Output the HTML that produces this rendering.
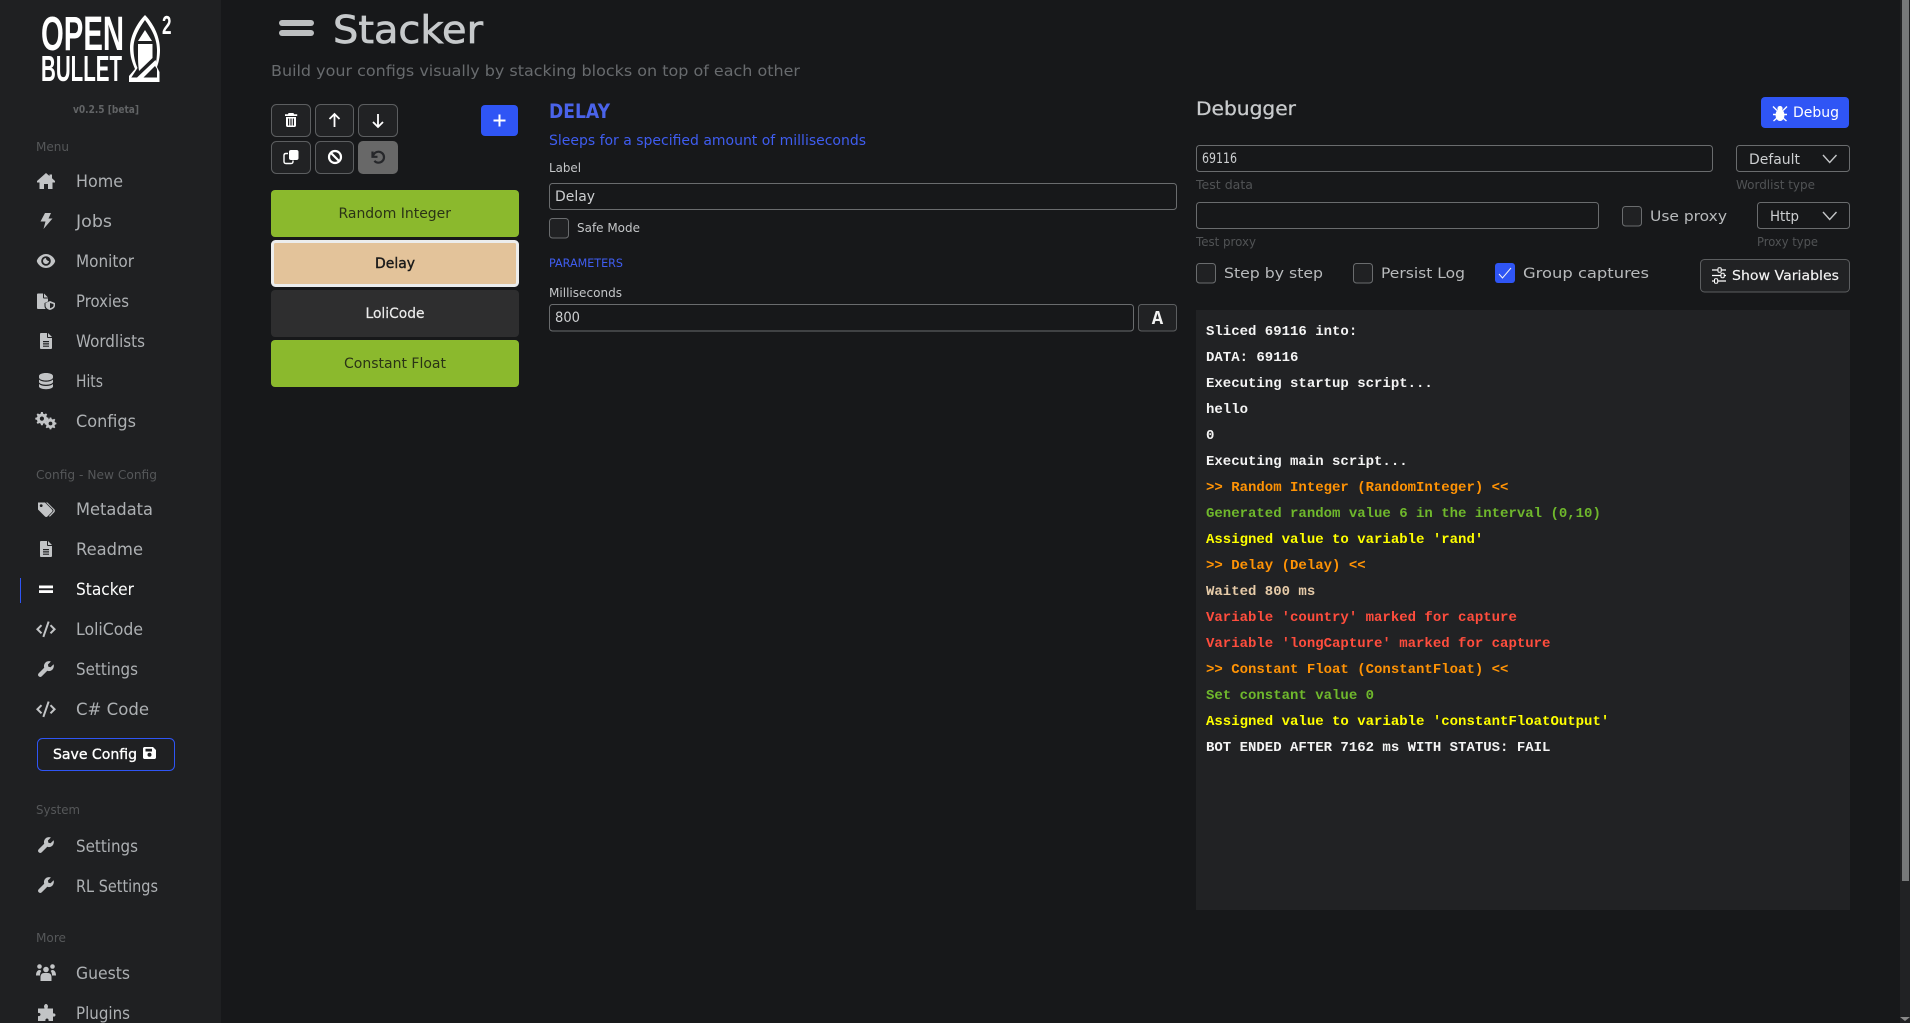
<!DOCTYPE html>
<html lang="en"><head><meta charset="utf-8"><title>Stacker</title>
<style>
html,body{margin:0;padding:0;width:1910px;height:1023px;overflow:hidden;background:#17181a}
svg{display:block;position:absolute;left:0;top:0}
text{font-family:"DejaVu Sans","Liberation Sans",sans-serif;white-space:pre}
.nav{font-size:16.5px;fill:#adb0b3}
.sec{font-size:12.5px;fill:#555759}
.ic{fill:#c2c4c6}
.hint{font-size:12px;fill:#515355}
.lab{font-size:12px;fill:#c4c6c8}
.val{font-size:14px;fill:#cdcfd1}
.chk{font-size:14.5px;fill:#b8babc}
.log{font-family:"Liberation Mono","DejaVu Sans Mono",monospace;font-size:14px;font-weight:700;fill:#f4f4f4}
.o{fill:#ff9305}.g{fill:#6fb82c}.y{fill:#ffff00}.r{fill:#ff4d3d}.t{fill:#e6cba8}
.box{fill:none;stroke:#6a6c6e;stroke-width:1}
.tb{fill:#212224;stroke:#5c5e60;stroke-width:1}
</style></head>
<body>
<svg width="1910" height="1023" viewBox="0 0 1910 1023" xmlns="http://www.w3.org/2000/svg">
<rect width="1910" height="1023" fill="#17181a"/>
<rect width="221" height="1023" fill="#1f2022"/>
<!-- scrollbar -->
<rect x="1900" width="10" height="1023" fill="#212224"/>
<rect x="1902" width="7" height="881" fill="#77797a"/>
<path d="M1901 1017h10l-5 4z" fill="#8a8a8a" transform="translate(-1 0)"/>

<!-- logo -->
<text x="41" y="50" font-size="48" font-weight="700" fill="#fff" textLength="83" lengthAdjust="spacingAndGlyphs" style="font-family:'Liberation Sans',sans-serif">OPEN</text>
<text x="41" y="81" font-size="36" font-weight="700" fill="#fff" textLength="81" lengthAdjust="spacingAndGlyphs" style="font-family:'Liberation Sans',sans-serif">BULLET</text>
<text x="162" y="34" font-size="26" font-weight="700" fill="#fff" textLength="9.5" lengthAdjust="spacingAndGlyphs" style="font-family:'Liberation Sans',sans-serif">2</text>
<path d="M145 15C152 22 160 35 160 50C160 57 158.500 63 157 67L159.500 72V82H129V76L135 69C132 62 130 56 130 48C130 35 138 22 145 15Z" fill="#fff"/>
<path d="M145 20C140 27 133.500 37 133.500 48C133.500 56 135 62 137.500 68L131 78H157V69L155 66C156.500 62 157 56 157 50C157 37 150 27 145 20Z" fill="#1f2022"/>
<path d="M145 30L152 41H138Z" fill="#fff"/>
<path d="M138 44H152.500V58L139 71C138 64 138 60 138 52Z" fill="#fff"/>
<path d="M155.500 60L157 64L143 78H136.500Z" fill="#fff"/>
<path d="M129 77.500H159.500V82H129Z" fill="#fff"/>
<text x="73" y="113" font-size="10.5" font-weight="700" fill="#626466" textLength="66" lengthAdjust="spacingAndGlyphs">v0.2.5 [beta]</text>

<!-- sidebar labels -->
<text class="sec" x="36" y="151" textLength="33" lengthAdjust="spacingAndGlyphs">Menu</text>
<text class="nav" x="76" y="187" textLength="47" lengthAdjust="spacingAndGlyphs">Home</text>
<text class="nav" x="76" y="227" textLength="36" lengthAdjust="spacingAndGlyphs">Jobs</text>
<text class="nav" x="76" y="267" textLength="58" lengthAdjust="spacingAndGlyphs">Monitor</text>
<text class="nav" x="76" y="307" textLength="53" lengthAdjust="spacingAndGlyphs">Proxies</text>
<text class="nav" x="76" y="347" textLength="69" lengthAdjust="spacingAndGlyphs">Wordlists</text>
<text class="nav" x="76" y="387" textLength="27" lengthAdjust="spacingAndGlyphs">Hits</text>
<text class="nav" x="76" y="427" textLength="60" lengthAdjust="spacingAndGlyphs">Configs</text>
<text class="sec" x="36" y="479" textLength="121" lengthAdjust="spacingAndGlyphs">Config - New Config</text>
<text class="nav" x="76" y="515" textLength="77" lengthAdjust="spacingAndGlyphs">Metadata</text>
<text class="nav" x="76" y="555" textLength="67" lengthAdjust="spacingAndGlyphs">Readme</text>
<text class="nav" x="76" y="595" textLength="58" lengthAdjust="spacingAndGlyphs" style="fill:#fff">Stacker</text>
<text class="nav" x="76" y="635" textLength="67" lengthAdjust="spacingAndGlyphs">LoliCode</text>
<text class="nav" x="76" y="675" textLength="62" lengthAdjust="spacingAndGlyphs">Settings</text>
<text class="nav" x="76" y="715" textLength="73" lengthAdjust="spacingAndGlyphs">C# Code</text>
<rect x="37.5" y="738.5" width="137" height="32" rx="5" fill="none" stroke="#2f55f5" stroke-width="1"/>
<text x="53" y="759" font-size="14.5" fill="#fff" stroke="#fff" stroke-width=".35" textLength="84" lengthAdjust="spacingAndGlyphs">Save Config</text>
<text class="sec" x="36" y="814" textLength="44" lengthAdjust="spacingAndGlyphs">System</text>
<text class="nav" x="76" y="852" textLength="62" lengthAdjust="spacingAndGlyphs">Settings</text>
<text class="nav" x="76" y="892" textLength="82" lengthAdjust="spacingAndGlyphs">RL Settings</text>
<text class="sec" x="36" y="942" textLength="30" lengthAdjust="spacingAndGlyphs">More</text>
<text class="nav" x="76" y="979" textLength="54" lengthAdjust="spacingAndGlyphs">Guests</text>
<text class="nav" x="76" y="1019" textLength="54" lengthAdjust="spacingAndGlyphs">Plugins</text>
<rect x="20" y="578" width="1" height="25" fill="#2f55f5"/>

<!-- sidebar icons -->
<defs>
<path id="wrench" d="M15.6 3.2l-3 3-2.2-.5-.5-2.2 3-3C11 -.2 8.800.2 7.400 1.600 6 3 5.600 5 6.200 6.700L.7 12.200c-.9.9-.9 2.300 0 3.100.9.900 2.300.900 3.100 0l5.500-5.500c1.700.6 3.700.2 5.100-1.200 1.300-1.400 1.800-3.600 1.200-5.400z"/>
<path id="code" d="M8.300 16.200L6.400 15.600 11.700 .3 13.600 .9zM4.800 13L0 8.200 4.800 3.500 6.200 4.900 2.900 8.200 6.200 11.600zM15.200 13L13.800 11.600 17.100 8.200 13.800 4.900 15.200 3.500 20 8.200z"/>
<path id="file" d="M7 0H1C.4 0 0 .4 0 1v14c0 .6.400 1 1 1h10c.6 0 1-.4 1-1V5H8C7.400 5 7 4.600 7 4zM8 0v4h4zM3 8h6v1.200H3zM3 10.300h6v1.200H3zM3 12.600h6v1.200H3z" fill-rule="evenodd"/>
</defs>
<g class="ic">
<path d="M46 173L37 181V182.500H39.500V189H44V184H48V189H52.500V182.500H55V181L52 178.300V174.500H49.500V176Z"/>
<path d="M45 213H51L48.500 218.500H52.500L43.500 229L45.500 221.500H40.500Z"/>
<path fill-rule="evenodd" d="M46 254C40.500 254 37 259 36.800 261C37 263 40.500 268 46 268C51.500 268 55 263 55.200 261C55 259 51.500 254 46 254ZM46 256.200A4.800 4.800 0 1 1 46 265.800A4.800 4.800 0 1 1 46 256.200ZM46 258A3 3 0 1 0 49 261C47.800 261 46 260 46 258Z"/>
<path d="M37 294.500C37 293.900 37.400 293.500 38 293.500H43V297.500C43 298 43.500 298.500 44 298.500H48V301.500L44.500 303V306C44.500 307 45 308.300 45.700 309H38C37.400 309 37 308.600 37 308ZM44 293.500L48 297.500H44Z"/>
<path fill-rule="evenodd" d="M50 301L55 303V305.500C55 307.800 53 309 50 310C47 309 45.500 307.800 45.500 305.500V303ZM50 303V308.300C52 307.500 53.500 306.800 53.500 305.500V304Z"/>
<use href="#file" x="40" y="333"/>
<path d="M46 373C49.900 373 53 374.300 53 376V377.500C53 379.200 49.900 380.500 46 380.500S39 379.200 39 377.500V376C39 374.300 42.100 373 46 373ZM39 379.500C40.500 381 43 381.700 46 381.700S51.500 381 53 379.500V382C53 383.500 49.900 384.700 46 384.700S39 383.500 39 382ZM39 384C40.500 385.400 43 386 46 386S51.500 385.400 53 384V386.500C53 388 49.900 389.200 46 389.200S39 388 39 386.500Z"/>
<g fill-rule="evenodd">
<path d="M41 413L42.800 413 43.200 414.700 44.500 415.300 46 414.400 47.200 415.600 46.300 417.100 46.900 418.400 48.500 418.800V420.500L46.900 420.900 46.300 422.200 47.200 423.700 46 424.900 44.500 424 43.200 424.600 42.800 426.300H41L40.600 424.600 39.300 424 37.800 424.900 36.600 423.700 37.500 422.200 36.900 420.900 35.300 420.500V418.800L36.900 418.400 37.500 417.100 36.600 415.600 37.800 414.400 39.300 415.300 40.600 414.700ZM41.900 417.500A2.100 2.100 0 1 0 41.900 421.700A2.100 2.100 0 1 0 41.900 417.500Z" transform="translate(0 -1)"/>
<path d="M49.700 418.500L51.300 418.500 51.700 420 52.900 420.500 54.200 419.700 55.300 420.800 54.500 422.100 55 423.300 56.400 423.700V425.300L55 425.700 54.500 426.900 55.300 428.200 54.200 429.300 52.900 428.500 51.700 429 51.300 430.400H49.700L49.300 429 48.100 428.500 46.800 429.300 45.700 428.200 46.500 426.900 46 425.700 44.600 425.300V423.700L46 423.300 46.500 422.100 45.700 420.800 46.800 419.700 48.100 420.500 49.300 420 ZM50.500 422.600A1.900 1.900 0 1 0 50.500 426.400A1.900 1.900 0 1 0 50.500 422.600Z" transform="translate(0 -1)"/>
<path d="M38 502.500H45L52 509.500C52.700 510.200 52.700 511.200 52 511.900L47.400 516.500C46.700 517.200 45.700 517.200 45 516.500L38 509.500ZM41.200 504.200A1.400 1.400 0 1 0 41.200 507A1.400 1.400 0 1 0 41.200 504.200Z"/>
</g>
<path d="M47.500 502.500L54.300 509.300C55.100 510.100 55.100 511.400 54.300 512.200L49.800 516.800 49 516L52.900 511.900C53.700 511.100 53.700 510.100 52.900 509.300L46 502.500Z"/>
<use href="#file" x="40" y="541"/>
<use href="#code" x="36" y="621"/>
<use href="#wrench" x="38" y="661"/>
<use href="#code" x="36" y="701"/>
<use href="#wrench" x="38" y="837"/>
<use href="#wrench" x="38" y="877"/>
<circle cx="39.500" cy="966.500" r="2.300"/><circle cx="52.500" cy="966.500" r="2.300"/><circle cx="46" cy="969.500" r="2.800"/>
<path d="M36 975.500C36 972 37.500 970 39.500 970C40.500 970 41 970.500 41.300 971C40.500 972 40 973.500 40 975.500ZM52 975.500C52 973.500 51.500 972 50.700 971C51 970.500 51.500 970 52.500 970C54.500 970 56 972 56 975.500ZM40.500 981V977C40.500 974.500 42 973 44 973H48C50 973 51.500 974.500 51.500 977V981Z"/>
<path d="M44 1006.500C44 1005 45 1004 46 1004S48 1005 48 1006.500L47.500 1008.500H53V1013.500C54.500 1013 55.500 1014 55.500 1015S54.500 1017 53 1016.500V1021H48.500C49 1019.500 48 1018.500 47 1018.500S45 1019.500 45.500 1021H38V1016C39.500 1016.500 40.500 1015.500 40.500 1014.500S39.500 1012.500 38 1013V1008.500H44.500Z"/>
</g>
<rect x="39" y="585.500" width="14" height="2.800" fill="#fff"/><rect x="39" y="590.200" width="14" height="2.800" fill="#fff"/>
<path fill="#fff" fill-rule="evenodd" d="M144.500 747H153L156 750V757.500C156 758.300 155.300 759 154.500 759H144.500C143.700 759 143 758.300 143 757.500V748.500C143 747.700 143.700 747 144.500 747ZM145.500 748.800V751.500H152V748.800ZM149.500 752.800A2 2 0 1 0 149.500 756.800A2 2 0 1 0 149.500 752.800Z"/>

<!-- header -->
<rect x="279" y="20" width="35" height="6" rx="3" fill="#bcbec0"/>
<rect x="279" y="30" width="35" height="6" rx="3" fill="#bcbec0"/>
<text x="333" y="43" font-size="38" fill="#c6c9cb" stroke="#c6c9cb" stroke-width=".7" textLength="150" lengthAdjust="spacingAndGlyphs">Stacker</text>
<text x="271" y="76" font-size="15.5" fill="#686b6e" textLength="529" lengthAdjust="spacingAndGlyphs">Build your configs visually by stacking blocks on top of each other</text>

<!-- toolbar -->
<rect class="tb" x="271.500" y="104.500" width="39" height="32" rx="5"/>
<rect class="tb" x="315.500" y="104.500" width="38" height="32" rx="5"/>
<rect class="tb" x="358.500" y="104.500" width="39" height="32" rx="5"/>
<rect class="tb" x="271.500" y="141.500" width="39" height="32" rx="5"/>
<rect class="tb" x="315.500" y="141.500" width="38" height="32" rx="5"/>
<rect x="358" y="141" width="40" height="33" rx="5" fill="#686868"/>
<rect x="481" y="105" width="37" height="31" rx="4" fill="#2f55f5"/>
<path d="M499.500 114.500V126.500M493.500 120.500H505.500" stroke="#fff" stroke-width="2" fill="none"/>
<path fill="#fff" fill-rule="evenodd" d="M288.500 113H293.500L294 114.200H297.200V116H285V114.200H288ZM286 117H296V125.500C296 126.300 295.400 127 294.600 127H287.400C286.600 127 286 126.300 286 125.500ZM288 118.500V125.500H289.200V118.500ZM290.400 118.500V125.500H291.600V118.500ZM292.800 118.500V125.500H294V118.500Z"/>
<path d="M334.500 127V114.500M329.500 119L334.500 114L339.500 119" stroke="#fff" stroke-width="1.800" fill="none"/>
<path d="M378 114V126.500M373 122L378 127L383 122" stroke="#fff" stroke-width="1.800" fill="none"/>
<rect x="289" y="150" width="9.500" height="10" rx="2" fill="#fff"/>
<path d="M288 153.500H286C284.800 153.500 284 154.300 284 155.500V161.500C284 162.700 284.800 163.500 286 163.500H291C292.200 163.500 293 162.700 293 161.500V160.500" stroke="#fff" stroke-width="1.400" fill="none"/>
<circle cx="335" cy="157" r="6" stroke="#fff" stroke-width="2.200" fill="none"/>
<path d="M331 153L339 161" stroke="#fff" stroke-width="2.200"/>
<path d="M372.500 151.500V156.800H377.500M373 156C374 153.300 376 151.700 378.500 151.700C381.500 151.700 384 154.200 384 157.200S381.500 162.700 378.500 162.700C376.800 162.700 375.400 162 374.400 160.800" stroke="#26272a" stroke-width="2.200" fill="none"/>

<!-- blocks -->
<rect x="271" y="190" width="248" height="47" rx="4" fill="#8bb92d"/>
<rect x="272.500" y="241.500" width="245" height="44" rx="3" fill="#e3c39a" stroke="#eceded" stroke-width="3"/>
<rect x="271" y="290" width="248" height="47" rx="4" fill="#2e2e2f"/>
<rect x="271" y="340" width="248" height="47" rx="4" fill="#8bb92d"/>
<text x="338.500" y="218" font-size="14" fill="#2a3316" textLength="112.500" lengthAdjust="spacingAndGlyphs">Random Integer</text>
<text x="375" y="268" font-size="14" fill="#1b1b1b" stroke="#1b1b1b" stroke-width=".4" textLength="40" lengthAdjust="spacingAndGlyphs">Delay</text>
<text x="365.500" y="318" font-size="14" fill="#ececec" stroke="#ececec" stroke-width=".2" textLength="59" lengthAdjust="spacingAndGlyphs">LoliCode</text>
<text x="344" y="368" font-size="14" fill="#2a3316" textLength="102" lengthAdjust="spacingAndGlyphs">Constant Float</text>

<!-- delay settings -->
<text x="549" y="118" font-size="19.500" font-weight="700" fill="#4a63ea" textLength="61" lengthAdjust="spacingAndGlyphs">DELAY</text>
<text x="549" y="145" font-size="14" fill="#3f5df0" textLength="317" lengthAdjust="spacingAndGlyphs">Sleeps for a specified amount of milliseconds</text>
<text class="lab" x="549" y="172" textLength="32" lengthAdjust="spacingAndGlyphs">Label</text>
<rect class="box" x="549.500" y="183.500" width="627" height="26" rx="3"/>
<text class="val" x="555" y="201" textLength="40" lengthAdjust="spacingAndGlyphs">Delay</text>
<rect class="box" x="549.500" y="218.500" width="19" height="19.500" rx="3" style="fill:#202123"/>
<text class="lab" x="577" y="232" textLength="63" lengthAdjust="spacingAndGlyphs">Safe Mode</text>
<text x="549" y="267" font-size="11.500" fill="#3f5df0" textLength="74" lengthAdjust="spacingAndGlyphs">PARAMETERS</text>
<text class="lab" x="549" y="297" textLength="73" lengthAdjust="spacingAndGlyphs">Milliseconds</text>
<rect class="box" x="549.500" y="304.500" width="584" height="26.500" rx="3"/>
<text class="val" x="555" y="322" textLength="25" lengthAdjust="spacingAndGlyphs">800</text>
<rect class="tb" x="1138.500" y="304.500" width="38" height="26.500" rx="3"/>
<text x="1157.500" y="324" text-anchor="middle" font-size="19" font-weight="700" fill="#f2f2f2" style="font-family:'Liberation Mono',monospace">A</text>

<!-- debugger -->
<text x="1196" y="115" font-size="18.500" fill="#c8cacc" stroke="#c8cacc" stroke-width=".3" textLength="100" lengthAdjust="spacingAndGlyphs">Debugger</text>
<rect x="1761" y="97" width="88" height="31" rx="4" fill="#2f55f5"/>
<g fill="#fff"><ellipse cx="1780" cy="115" rx="4.500" ry="6"/><circle cx="1780" cy="108.500" r="2.600"/>
<path d="M1773 106.500L1777 110.500M1787 106.500L1783 110.500M1773 114.500H1777M1787 114.500H1783M1773.500 121L1777 118M1786.500 121L1783 118" stroke="#fff" stroke-width="1.400"/></g>
<text x="1793" y="117" font-size="14" fill="#fff" textLength="46" lengthAdjust="spacingAndGlyphs">Debug</text>

<rect class="box" x="1196.500" y="145.500" width="516" height="26" rx="3"/>
<text class="val" x="1202" y="163" textLength="35" lengthAdjust="spacingAndGlyphs">69116</text>
<rect class="box" x="1736.500" y="145.500" width="113" height="26" rx="3"/>
<text class="val" x="1749" y="164" textLength="51" lengthAdjust="spacingAndGlyphs">Default</text>
<path d="M1823 155L1829.700 162.500L1836.500 155" stroke="#c4c6c8" stroke-width="1.400" fill="none"/>
<text class="hint" x="1196" y="189" textLength="57" lengthAdjust="spacingAndGlyphs">Test data</text>
<text class="hint" x="1736" y="189" textLength="79" lengthAdjust="spacingAndGlyphs">Wordlist type</text>

<rect class="box" x="1196.500" y="202.500" width="402" height="26" rx="3"/>
<rect class="box" x="1622.500" y="206.500" width="19" height="19.500" rx="3" style="fill:#202123"/>
<text class="chk" x="1650" y="221" textLength="77" lengthAdjust="spacingAndGlyphs">Use proxy</text>
<rect class="box" x="1757.500" y="202.500" width="92" height="26" rx="3"/>
<text class="val" x="1770" y="221" textLength="29" lengthAdjust="spacingAndGlyphs">Http</text>
<path d="M1823 212L1829.700 219.500L1836.500 212" stroke="#c4c6c8" stroke-width="1.400" fill="none"/>
<text class="hint" x="1196" y="246" textLength="60" lengthAdjust="spacingAndGlyphs">Test proxy</text>
<text class="hint" x="1757" y="246" textLength="61" lengthAdjust="spacingAndGlyphs">Proxy type</text>

<rect class="box" x="1196.500" y="263.500" width="19" height="19.500" rx="3" style="fill:#202123"/>
<text class="chk" x="1224" y="278" textLength="99" lengthAdjust="spacingAndGlyphs">Step by step</text>
<rect class="box" x="1353.500" y="263.500" width="19" height="19.500" rx="3" style="fill:#202123"/>
<text class="chk" x="1381" y="278" textLength="84" lengthAdjust="spacingAndGlyphs">Persist Log</text>
<rect x="1495" y="263" width="20" height="20" rx="3" fill="#2f55f5"/>
<path d="M1499 274L1502.500 278L1511 268" stroke="#f4f4f4" stroke-width="1" fill="none"/>
<text class="chk" x="1523" y="278" textLength="126" lengthAdjust="spacingAndGlyphs">Group captures</text>
<rect class="tb" x="1700.500" y="259.500" width="149" height="32.500" rx="4"/>
<path d="M1712 270H1726M1712 275.500H1726M1712 281H1726" stroke="#fff" stroke-width="1.300"/>
<rect x="1718" y="267.800" width="3.200" height="4.400" rx="1" fill="#212224" stroke="#fff" stroke-width="1"/>
<rect x="1721" y="273.300" width="3.200" height="4.400" rx="1" fill="#212224" stroke="#fff" stroke-width="1"/>
<rect x="1714.500" y="278.800" width="3.200" height="4.400" rx="1" fill="#212224" stroke="#fff" stroke-width="1"/>
<text x="1732" y="280" font-size="13.500" fill="#f4f4f4" stroke="#f4f4f4" stroke-width=".15" textLength="107" lengthAdjust="spacingAndGlyphs">Show Variables</text>

<!-- log -->
<rect x="1196" y="310" width="654" height="600" fill="#212224"/>
<text class="log" x="1206" y="335">Sliced 69116 into:</text>
<text class="log" x="1206" y="361">DATA: 69116</text>
<text class="log" x="1206" y="387">Executing startup script...</text>
<text class="log" x="1206" y="413">hello</text>
<text class="log" x="1206" y="439">0</text>
<text class="log" x="1206" y="465">Executing main script...</text>
<text class="log o" x="1206" y="491">&gt;&gt; Random Integer (RandomInteger) &lt;&lt;</text>
<text class="log g" x="1206" y="517">Generated random value 6 in the interval (0,10)</text>
<text class="log y" x="1206" y="543">Assigned value to variable 'rand'</text>
<text class="log o" x="1206" y="569">&gt;&gt; Delay (Delay) &lt;&lt;</text>
<text class="log t" x="1206" y="595">Waited 800 ms</text>
<text class="log r" x="1206" y="621">Variable 'country' marked for capture</text>
<text class="log r" x="1206" y="647">Variable 'longCapture' marked for capture</text>
<text class="log o" x="1206" y="673">&gt;&gt; Constant Float (ConstantFloat) &lt;&lt;</text>
<text class="log g" x="1206" y="699">Set constant value 0</text>
<text class="log y" x="1206" y="725">Assigned value to variable 'constantFloatOutput'</text>
<text class="log" x="1206" y="751">BOT ENDED AFTER 7162 ms WITH STATUS: FAIL</text>
</svg>
</body></html>
